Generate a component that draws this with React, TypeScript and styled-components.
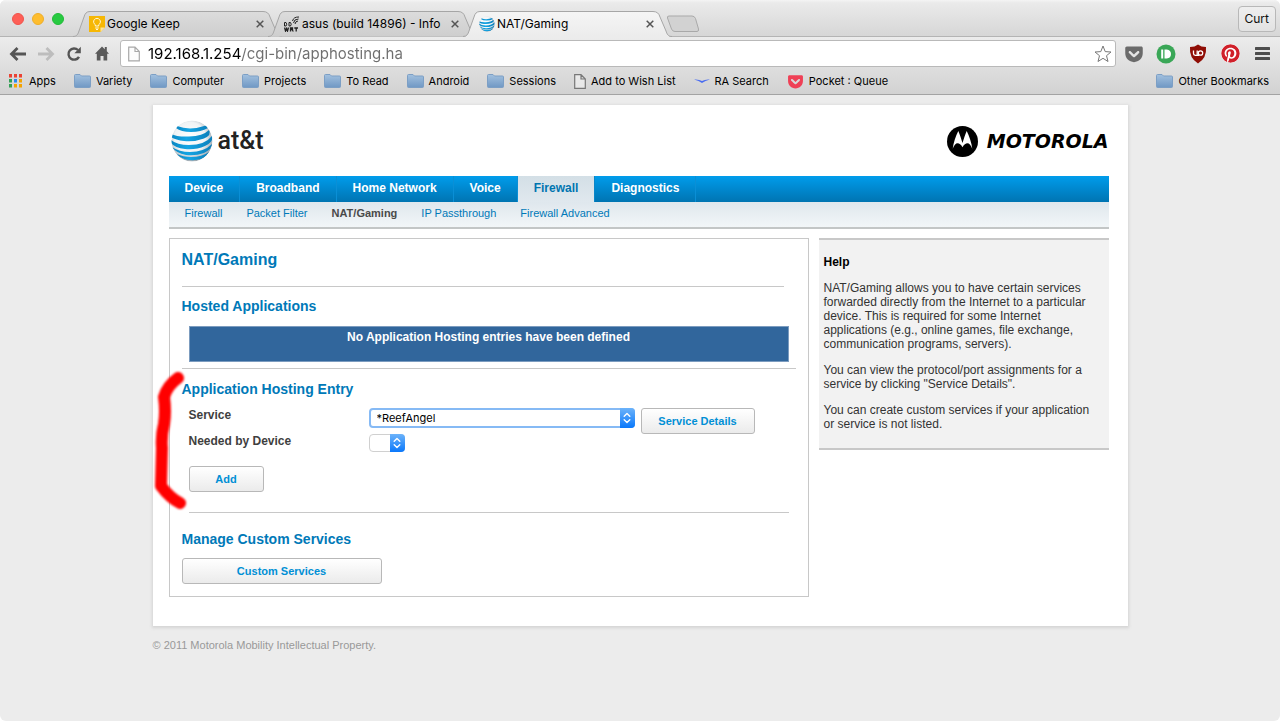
import React from "react";
import styled, { createGlobalStyle } from "styled-components";
import { FaPinterest, FaGetPocket } from "react-icons/fa";

const GlobalStyle = createGlobalStyle`
  *, *::before, *::after { box-sizing: border-box; }
  body { margin: 0; background: #fff; font-family: "Liberation Sans", Arial, sans-serif; }
  h1, h2, p, ul { margin: 0; padding: 0; }
  ul { list-style: none; }
  a { text-decoration: none; }
  button, input, select { font-family: inherit; }
  svg { display: block; flex: none; }
`;

const Window = styled.div`
  min-height: 100vh;
  background: #ececec;
  border-radius: 6px;
  overflow: hidden;
`;

/* ---------- browser frame ---------- */

const Chrome = styled.header`
  font-family: Inter, Roboto, sans-serif;
  color: #000;
`;

const TabStrip = styled.div`
  display: flex;
  align-items: flex-end;
  height: 37px;
  padding: 0 4px 0 12px;
  background: linear-gradient(#f4f4f4, #eaeaea 3px, #d6d6d6);
  box-shadow: inset 0 -1px #b4b4b4;
`;

const Lights = styled.div`
  display: flex;
  gap: 8px;
  width: 61px;
  height: 37px;
  align-items: center;
`;

const Light = styled.button<{ $color: string; $edge: string }>`
  width: 12px;
  height: 12px;
  padding: 0;
  border: 1px solid ${(p) => p.$edge};
  border-radius: 50%;
  background: ${(p) => p.$color};
`;

const Tab = styled.div<{ $active?: boolean }>`
  position: relative;
  z-index: ${(p) => (p.$active ? 2 : 0)};
  display: flex;
  align-items: center;
  flex: 0 1 209px;
  min-width: 0;
  height: 26px;
  margin-right: -14px;
  padding: 0 17px 0 16px;
  gap: 2px;
`;

const TabShape = styled.svg`
  position: absolute;
  inset: 0;
  width: 100%;
  height: 100%;
`;

const TabTitle = styled.a`
  position: relative;
  flex: 1;
  overflow: hidden;
  white-space: nowrap;
  font-size: 12px;
  line-height: 16px;
  color: #000;
`;

const TabIcon = styled.span`
  position: relative;
  width: 16px;
`;

const CloseButton = styled.button`
  position: relative;
  width: 10px;
  height: 10px;
  padding: 1px;
  border: 0;
  background: none;
`;

const NewTab = styled.button`
  margin: 0 auto 4px 8px;
  padding: 0;
  border: 0;
  background: none;
`;

const UserButton = styled.button`
  align-self: center;
  height: 26px;
  padding: 0 6px;
  border: 1px solid #b8b8b8;
  border-radius: 4px;
  background: linear-gradient(#efefef, #e2e2e2);
  font-size: 12px;
  color: #111;
`;

const Tools = styled.div`
  background: linear-gradient(#ececec, #d2d2d2);
  border-bottom: 1px solid #a3a3a3;
`;

const Toolbar = styled.div`
  display: flex;
  align-items: center;
  height: 33px;
  padding: 0 8px;
`;

const NavButtons = styled.div`
  display: flex;
  gap: 8px;
  width: 112px;
`;

const IconButton = styled.button`
  display: flex;
  align-items: center;
  justify-content: center;
  width: 20px;
  height: 20px;
  padding: 0;
  border: 0;
  background: none;
  color: #5c5c5c;
`;

const PinIcon = styled(FaPinterest)`
  border-radius: 50%;
  background: #fff;
  color: #d0202a;
`;

const AddressBar = styled.label`
  display: flex;
  align-items: center;
  flex: 1;
  min-width: 0;
  height: 27px;
  gap: 8px;
  padding: 0 2px 0 7px;
  background: #fff;
  border: 1px solid #b9b9b9;
  border-radius: 3px;
`;

const AddressInput = styled.input`
  flex: 1;
  min-width: 0;
  height: 24px;
  padding: 0;
  border: 0;
  outline: 0;
  font-size: 15px;
  color: #6e6e6e;
  background: linear-gradient(90deg, #000 94px, #6e6e6e 94px);
  background-clip: text;
  -webkit-background-clip: text;
  -webkit-text-fill-color: transparent;
`;

const Extensions = styled.div`
  display: flex;
  gap: 12px;
  padding-left: 8px;
`;

const Bookmarks = styled.nav`
  display: flex;
  align-items: center;
  height: 24px;
  padding: 0 11px 2px 8px;
  gap: 18px;
`;

const Bookmark = styled.a<{ $last?: boolean }>`
  display: flex;
  align-items: center;
  gap: 5px;
  margin-left: ${(p) => (p.$last ? "auto" : "0")};
  font-size: 11px;
  line-height: 16px;
  white-space: nowrap;
  color: #000;
`;

/* ---------- router page ---------- */

const Page = styled.div`
  max-width: 975px;
  margin: 10px auto 0;
  padding-bottom: 24px;
`;

const Sheet = styled.div`
  padding: 14px 19px 29px 16px;
  background: #fff;
  box-shadow: 0 1px 3px 1px #d4d4d4;
`;

const Brand = styled.div`
  display: flex;
  align-items: center;
  justify-content: space-between;
  height: 57px;
  padding: 0 0 13px 2px;
`;

const Logo = styled.div<{ $gap: number }>`
  display: flex;
  align-items: center;
  gap: ${(p) => p.$gap}px;
`;

const AttWord = styled.span`
  font: 500 25px/32px Roboto, sans-serif;
  color: #222;
`;

const MotoWord = styled.span`
  font: italic 700 19px/20px "DejaVu Sans", sans-serif;
  color: #000;
`;

const MainNav = styled.ul`
  display: flex;
  height: 26px;
  background: linear-gradient(#009ceb, #0074b2);
`;

const MainLink = styled.a<{ $active?: boolean }>`
  display: block;
  height: 26px;
  padding: 0 16px;
  border-right: 1px solid ${(p) => (p.$active ? "#0a86c8" : "#0a8fd6")};
  background: ${(p) => (p.$active ? "linear-gradient(#d3dfe6, #e0e8ee)" : "none")};
  font-size: 12px;
  font-weight: bold;
  line-height: 24px;
  color: ${(p) => (p.$active ? "#0075b0" : "#fff")};
`;

const SubNav = styled.ul`
  display: flex;
  gap: 24px;
  height: 27px;
  padding-left: 16px;
  background: linear-gradient(#dfe7ed, #f2f6f8);
  border-bottom: 2px solid #c3c6c6;
`;

const SubLink = styled.a<{ $active?: boolean }>`
  font-size: 11px;
  line-height: 22px;
  font-weight: ${(p) => (p.$active ? "bold" : "normal")};
  color: ${(p) => (p.$active ? "#4a4a4a" : "#0079b8")};
`;

const Columns = styled.div`
  display: flex;
  align-items: flex-start;
  gap: 10px;
  padding-top: 9px;
`;

const Panel = styled.main`
  flex: 1;
  padding: 12px 12px;
  border: 1px solid #c8c8c8;
`;

const Title = styled.h1`
  font-size: 16px;
  line-height: 18px;
  color: #0079b8;
`;

const Heading = styled.h2`
  font-size: 14px;
  line-height: 18px;
  color: #0079b8;
`;

const Rule = styled.hr<{ $left?: number; $right?: number; $top: number; $bottom: number }>`
  height: 1px;
  border: 0;
  background: #c8c8c8;
  margin: ${(p) => `${p.$top}px ${p.$right ?? 0}px ${p.$bottom}px ${p.$left ?? 0}px`};
`;

const Notice = styled.p`
  height: 36px;
  margin: 11px 7px 0;
  border: 1px solid #7c9cbf;
  background: #31669c;
  font-size: 12px;
  font-weight: bold;
  line-height: 20px;
  text-align: center;
  color: #fff;
`;

const Entry = styled.form`
  position: relative;
`;

const Fields = styled.div`
  padding: 10px 0 0 7px;
`;

const Mark = styled.svg`
  position: absolute;
  left: -30px;
  top: -14px;
  pointer-events: none;
  filter: blur(1px);
`;

const Field = styled.div`
  display: flex;
  align-items: flex-start;
  height: 26px;
`;

const FieldLabel = styled.label`
  width: 180px;
  font-size: 12px;
  font-weight: bold;
  line-height: 14px;
  color: #3f3f3f;
`;

const SelectBox = styled.span<{ $wide?: boolean }>`
  position: relative;
  width: ${(p) => (p.$wide ? "266px" : "36px")};
  margin-right: 6px;
`;

const Select = styled.select<{ $wide?: boolean }>`
  display: block;
  appearance: none;
  width: 100%;
  height: ${(p) => (p.$wide ? "20px" : "18px")};
  padding: 0 20px 0 6px;
  border: ${(p) => (p.$wide ? "2px solid #86baf5" : "1px solid #d0d0d0")};
  border-radius: 4px;
  outline: 0;
  background: #fff;
  font: 11px/16px Inter, sans-serif;
  color: #000;
`;

const Stepper = styled.span`
  position: absolute;
  top: 0;
  right: 0;
  bottom: 0;
  width: 15px;
  display: flex;
  align-items: center;
  justify-content: center;
  border-radius: 0 4px 4px 0;
  background: linear-gradient(#6cb3fa, #0a78fb);
  pointer-events: none;
`;

const Button = styled.button<{ $width: number }>`
  width: ${(p) => p.$width}px;
  height: 26px;
  padding: 0;
  border: 1px solid #b8b8b8;
  border-radius: 3px;
  background: linear-gradient(#fff, #ebebeb);
  font-size: 11px;
  font-weight: bold;
  color: #008fd5;
`;

const AddRow = styled.div`
  padding: 6px 7px 0;
`;

const CustomRow = styled.div`
  padding-top: 10px;
`;

const Help = styled.aside`
  width: 290px;
  padding: 15px 12px 17px 5px;
  border: solid #c8c8c8;
  border-width: 2px 0;
  background: #f2f2f2;
  font-size: 12px;
  line-height: 14px;
  color: #333;

  p { margin-top: 12px; }
`;

const HelpTitle = styled.h2`
  font-size: 12px;
  line-height: 14px;
  color: #000;
`;

const Footer = styled.footer`
  padding-top: 12px;
  font-size: 11px;
  line-height: 14px;
  color: #999;
`;

/* ---------- drawings ---------- */

const Globe = ({ size }: { size: number }) => (
  <svg width={size} height={size} viewBox="0 0 42 42" aria-hidden="true">
    <defs>
      <radialGradient id="ball" cx="45%" cy="42%" r="58%">
        <stop offset="0" stopColor="#fff" />
        <stop offset="0.65" stopColor="#f0f3f5" />
        <stop offset="1" stopColor="#9aa6af" />
      </radialGradient>
      <linearGradient id="band" x1="0" x2="1">
        <stop offset="0" stopColor="#0a86c2" />
        <stop offset="0.4" stopColor="#14a5e4" />
        <stop offset="1" stopColor="#0b7fbb" />
      </linearGradient>
      <clipPath id="disc"><circle cx="21" cy="21" r="20.5" /></clipPath>
    </defs>
    <g clipPath="url(#disc)">
      <circle cx="21" cy="21" r="20.5" fill="url(#ball)" />
      <g fill="url(#band)">
        <path d="M6 6 Q19 11 35 5.500 L37 8 Q30 12 20 12 Q10 12 5 8 Z" />
        <path d="M0 14 Q6 17 18 16.500 Q32 16 38 10 Q41 15 33 18.500 Q24 22 13 21 Q5 20 0 17 Z" />
        <path d="M0 20 Q6 25 18 25 Q34 25 41 16 Q43 22 34 26 Q25 30 14 29 Q4 28 0 23 Z" />
        <path d="M1 27 Q8 32 19 32 Q33 32 41 24 Q41 29 33 33 Q25 36 15 35 Q5 33 1 27 Z" />
        <path d="M6 34 Q12 37 20 37 Q31 37 38 32 Q35 37 30 39 Q23 41 15 39.500 Q8 37 6 34 Z" />
      </g>
    </g>
  </svg>
);

const MotoMark = () => (
  <svg width="31" height="31" viewBox="0 0 31 31" aria-hidden="true">
    <circle cx="15.500" cy="15.500" r="15.500" fill="#000" />
    <path
      fill="#fff"
      d="M11.300 5 C12.800 8.500 14.300 13 15.500 17 C16.700 13 18.200 8.500 19.700 5 C22.200 10 24.600 17 25.300 22.800 C24 19.300 22.300 17.300 20.400 17.300 C18.600 17.300 17.200 18.300 15.500 21.300 C13.800 18.300 12.400 17.300 10.600 17.300 C8.700 17.300 7 19.300 5.700 22.800 C6.400 17 8.800 10 11.300 5 Z"
    />
  </svg>
);

const TabOutline = ({ active }: { active?: boolean }) => (
  <TabShape viewBox="0 0 209 26" preserveAspectRatio="none" aria-hidden="true">
    <defs>
      <linearGradient id={active ? "tabOn" : "tabOff"} x1="0" y1="0" x2="0" y2="1">
        <stop offset="0" stopColor={active ? "#f5f5f5" : "#dcdcdc"} />
        <stop offset="1" stopColor={active ? "#ececec" : "#cecece"} />
      </linearGradient>
    </defs>
    <path
      d="M0 25.500 C4 25.500 5 23 6 20 L11 6 C12 2.500 13.500 0.500 17 0.500 H190 C194 0.500 196 2.500 197 6 L203 20 C204 23 205 25.500 209 25.500"
      fill={`url(#${active ? "tabOn" : "tabOff"})`}
      stroke="#a6a6a6"
    />
    {active && <path d="M3 25.500 H206" stroke="#ececec" />}
  </TabShape>
);

const Cross = () => (
  <svg width="8" height="8" viewBox="0 0 8 8" stroke="#555" strokeWidth="1.500" aria-hidden="true">
    <path d="M0.700 0.700 L7.300 7.300 M7.300 0.700 L0.700 7.300" />
  </svg>
);

const KeepIcon = () => (
  <svg width="16" height="16" viewBox="0 0 16 16" fill="none" aria-hidden="true">
    <path d="M0 0 H16 V11.500 L11.500 16 H0 Z" fill="#f6b704" />
    <path d="M11.500 16 V11.500 H16 Z" fill="#fde49a" />
    <path d="M6.300 10 V8.700 A3.400 3.400 0 1 1 9.700 8.700 V10 Z" stroke="#fff8dc" />
    <path d="M6.200 12 H9.800 M7 13.500 H9" stroke="#fff8dc" />
  </svg>
);

const DdwrtIcon = () => (
  <svg width="16" height="16" viewBox="0 0 16 16" fill="none" stroke="#222" aria-hidden="true">
    <path d="M0.500 6.500 V10 H2 Q3.500 8.200 2 6.500 Z M5 6.500 V10 H6.500 Q8 8.200 6.500 6.500 Z" />
    <path d="M0.500 11.500 L1.500 15 L2.500 12.500 L3.500 15 L4.500 11.500 M6.500 15.500 V12 H8.500 V13.500 H6.500 M8 13.500 L9.300 15.500 M10.300 12 H14 M12.200 12 V15.500" strokeWidth="1.300" />
    <path d="M8.500 5 Q9.500 0.800 15 1 M9.500 7 Q10 3 14.500 3 M11 8 Q11.500 5 14 5" />
  </svg>
);

const Folder = () => (
  <svg width="17" height="14" viewBox="0 0 17 14" aria-hidden="true">
    <defs>
      <linearGradient id="folder" x1="0" y1="0" x2="0" y2="1">
        <stop offset="0" stopColor="#a3c1df" />
        <stop offset="1" stopColor="#7098c4" />
      </linearGradient>
    </defs>
    <path d="M0.500 12.500 V1.500 Q0.500 0.500 1.500 0.500 H6 L7.500 2 H15.500 Q16.500 2 16.500 3 V12.500 Q16.500 13.500 15.500 13.500 H1.500 Q0.500 13.500 0.500 12.500 Z" fill="url(#folder)" stroke="#7c9fc5" />
  </svg>
);

const Sheetlet = ({ color, width, height }: { color: string; width: number; height: number }) => (
  <svg width={width} height={height} viewBox="0 0 12 15" fill="#fafafa" fillOpacity="0.5" stroke={color} aria-hidden="true">
    <path d="M0.700 0.700 H7 L11.300 5 V14.300 H0.700 Z M7 0.700 V5 H11.300" strokeWidth="1.200" />
  </svg>
);

const AppsIcon = () => (
  <svg width="16" height="14" viewBox="0 0 16 14" aria-hidden="true">
    {["#ea4335", "#ea4335", "#ea4335", "#34a056", "#2a8af0", "#f4a300", "#34a056", "#f4a300", "#f4a300"].map((c, i) => (
      <rect key={i} x={1 + (i % 3) * 5} y={Math.floor(i / 3) * 5} width="3" height="3.500" fill={c} />
    ))}
  </svg>
);

const WingIcon = () => (
  <svg width="16" height="14" viewBox="0 0 16 14" aria-hidden="true">
    <path d="M0 5.500 Q5 5 8 7 Q11 5 16 5.500 Q11 6.500 8 9 Q5 6.500 0 5.500 Z" fill="#4a6cf0" />
  </svg>
);

const ChromeTab = ({ title, icon, active }: { title: string; icon: React.ReactNode; active?: boolean }) => (
  <Tab $active={active}>
    <TabOutline active={active} />
    <TabIcon>{icon}</TabIcon>
    <TabTitle href="#tab">{title}</TabTitle>
    <CloseButton aria-label={`Close ${title}`}><Cross /></CloseButton>
  </Tab>
);

const Arrows = () => (
  <Stepper>
    <svg width="8" height="12" viewBox="0 0 8 12" fill="none" stroke="#fff" strokeWidth="1.400" strokeLinecap="round" strokeLinejoin="round">
      <path d="M1.200 4.200 L4 1.500 L6.800 4.200 M1.200 7.800 L4 10.500 L6.800 7.800" />
    </svg>
  </Stepper>
);

const folders = ["Variety", "Computer", "Projects", "To Read", "Android", "Sessions"];
const sections = ["Device", "Broadband", "Home Network", "Voice", "Firewall", "Diagnostics"];
const pages = ["Firewall", "Packet Filter", "NAT/Gaming", "IP Passthrough", "Firewall Advanced"];

export default function App() {
  return (
    <Window>
      <GlobalStyle />
      <Chrome>
        <TabStrip>
          <Lights>
            <Light $color="#fe5f57" $edge="#f0544c" aria-label="Close window" />
            <Light $color="#febd2e" $edge="#eeae29" aria-label="Minimize window" />
            <Light $color="#28ca41" $edge="#22bb38" aria-label="Zoom window" />
          </Lights>
          <ChromeTab title="Google Keep" icon={<KeepIcon />} />
          <ChromeTab title="asus (build 14896) - Info" icon={<DdwrtIcon />} />
          <ChromeTab title="NAT/Gaming" icon={<Globe size={16} />} active />
          <NewTab aria-label="New tab">
            <svg width="34" height="18" viewBox="0 0 34 18">
              <path d="M3 1 H26 Q28.500 1 29.500 3.500 L32.500 14 Q33 16.500 31 16.500 H9 Q6.500 16.500 5.500 14 L1.500 3 Q1 1 3 1 Z" fill="#d2d2d2" stroke="#a9a9a9" />
            </svg>
          </NewTab>
          <UserButton>Curt</UserButton>
        </TabStrip>
        <Tools>
          <Toolbar>
            <NavButtons>
              <IconButton aria-label="Back">
                <svg width="18" height="16" viewBox="0 0 18 16" fill="none" stroke="#555" strokeWidth="2.800">
                  <path d="M17 8 H3 M8.500 2 L2.500 8 L8.500 14" />
                </svg>
              </IconButton>
              <IconButton aria-label="Forward">
                <svg width="18" height="16" viewBox="0 0 18 16" fill="none" stroke="#bdbdbd" strokeWidth="2.800">
                  <path d="M1 8 H15 M9.500 2 L15.500 8 L9.500 14" />
                </svg>
              </IconButton>
              <IconButton aria-label="Reload">
                <svg width="16" height="16" viewBox="0 0 16 16" fill="none" stroke="#555" strokeWidth="2.400">
                  <path d="M13 10.800 A5.600 5.600 0 1 1 12 4" />
                  <path d="M14.800 0.800 V7.200 H8.400 Z" fill="#555" stroke="none" />
                </svg>
              </IconButton>
              <IconButton aria-label="Home">
                <svg width="14" height="15" viewBox="0 0 14 15" fill="#5a5a5a">
                  <path d="M7 0.500 L9.800 3.300 V1 H11.800 V5.300 L14 7.700 H12.200 V14.500 H8.500 V10 H5.500 V14.500 H1.800 V7.700 H0 Z" />
                </svg>
              </IconButton>
            </NavButtons>
            <AddressBar>
              <Sheetlet color="#a8a8a8" width={12} height={16} />
              <AddressInput aria-label="Address" defaultValue="192.168.1.254/cgi-bin/apphosting.ha" />
              <IconButton aria-label="Bookmark this page">
                <svg width="18" height="18" viewBox="0 0 18 18" fill="#fff" stroke="#777" strokeLinejoin="round">
                  <path d="M9 1 L11.200 6.600 L17 7 L12.500 10.700 L14 16.500 L9 13.300 L4 16.500 L5.500 10.700 L1 7 L6.800 6.600 Z" />
                </svg>
              </IconButton>
            </AddressBar>
            <Extensions>
              <IconButton aria-label="Save to Pocket"><FaGetPocket size={20} color="#6b6b6b" /></IconButton>
              <IconButton aria-label="Pushbullet">
                <svg width="20" height="20" viewBox="0 0 20 20">
                  <circle cx="10" cy="10" r="9.500" fill="#3aa757" />
                  <path d="M5.200 5.500 H7.200 V14.500 H5.200 Z M8.500 5.500 H10.800 Q15 6 15 10 Q15 14 10.800 14.500 H8.500 Z" fill="#fff" />
                </svg>
              </IconButton>
              <IconButton aria-label="uBlock">
                <svg width="18" height="20" viewBox="0 0 18 20" fill="none">
                  <path d="M9 0.500 Q12 3 17 3 Q18 14 9 19.500 Q0 14 1 3 Q6 3 9 0.500 Z" fill="#8f0d05" />
                  <path d="M4.500 6.500 V9.500 Q4.500 11.300 6.300 11.300 H8.200 V6.500 M8.200 11.300 H10" stroke="#fff" strokeWidth="1.300" />
                  <circle cx="11.500" cy="9" r="2.200" stroke="#fff" strokeWidth="1.300" />
                </svg>
              </IconButton>
              <IconButton aria-label="Pin it"><PinIcon size={19} /></IconButton>
              <IconButton aria-label="Menu">
                <svg width="15" height="14" viewBox="0 0 15 14" fill="#4d4d4d">
                  <rect width="15" height="3" y="0" rx="0.500" /><rect width="15" height="3" y="5" rx="0.500" /><rect width="15" height="3" y="10" rx="0.500" />
                </svg>
              </IconButton>
            </Extensions>
          </Toolbar>
          <Bookmarks>
            <Bookmark href="#apps"><AppsIcon />Apps</Bookmark>
            {folders.map((name) => (
              <Bookmark key={name} href="#folder"><Folder />{name}</Bookmark>
            ))}
            <Bookmark href="#wish"><Sheetlet color="#777" width={12} height={15} />Add to Wish List</Bookmark>
            <Bookmark href="#ra"><WingIcon />RA Search</Bookmark>
            <Bookmark href="#pocket"><FaGetPocket size={17} color="#ef4056" />Pocket : Queue</Bookmark>
            <Bookmark href="#other" $last><Folder />Other Bookmarks</Bookmark>
          </Bookmarks>
        </Tools>
      </Chrome>

      <Page>
        <Sheet>
          <Brand>
            <Logo $gap={5}><Globe size={42} /><AttWord>at&amp;t</AttWord></Logo>
            <Logo $gap={9}><MotoMark /><MotoWord>MOTOROLA</MotoWord></Logo>
          </Brand>
          <nav>
            <MainNav>
              {sections.map((name) => (
                <li key={name}><MainLink href="#section" $active={name === "Firewall"}>{name}</MainLink></li>
              ))}
            </MainNav>
            <SubNav>
              {pages.map((name) => (
                <li key={name}><SubLink href="#page" $active={name === "NAT/Gaming"}>{name}</SubLink></li>
              ))}
            </SubNav>
          </nav>
          <Columns>
            <Panel>
              <Title>NAT/Gaming</Title>
              <Rule $top={17} $right={12} $bottom={10} />
              <Heading>Hosted Applications</Heading>
              <Notice>No Application Hosting entries have been defined</Notice>
              <Rule $top={6} $bottom={11} />
              <Entry onSubmit={(e) => e.preventDefault()}>
                <Heading>Application Hosting Entry</Heading>
                <Fields>
                  <Field>
                    <FieldLabel htmlFor="service">Service</FieldLabel>
                    <SelectBox $wide>
                      <Select id="service" $wide><option>*ReefAngel</option></Select>
                      <Arrows />
                    </SelectBox>
                    <Button type="button" $width={114}>Service Details</Button>
                  </Field>
                  <Field>
                    <FieldLabel htmlFor="device">Needed by Device</FieldLabel>
                    <SelectBox>
                      <Select id="device"><option></option></Select>
                      <Arrows />
                    </SelectBox>
                  </Field>
                </Fields>
                <AddRow><Button $width={75}>Add</Button></AddRow>
                <Mark width="40" height="150" viewBox="0 0 40 150" fill="none" aria-hidden="true">
                  <path d="M26 12 Q15 20 12 31 Q14 46 12 58 Q9 70 10 82 L9 120 Q18 132 28 137" stroke="#f00" strokeWidth="12" strokeLinecap="round" strokeLinejoin="round" />
                </Mark>
              </Entry>
              <Rule $top={20} $left={7} $right={7} $bottom={17} />
              <Heading>Manage Custom Services</Heading>
              <CustomRow><Button $width={200}>Custom Services</Button></CustomRow>
            </Panel>
            <Help>
              <HelpTitle>Help</HelpTitle>
              <p>NAT/Gaming allows you to have certain services forwarded directly from the Internet to a particular device. This is required for some Internet applications (e.g., online games, file exchange, communication programs, servers).</p>
              <p>You can view the protocol/port assignments for a service by clicking "Service Details".</p>
              <p>You can create custom services if your application or service is not listed.</p>
            </Help>
          </Columns>
        </Sheet>
        <Footer>© 2011 Motorola Mobility Intellectual Property.</Footer>
      </Page>
    </Window>
  );
}
